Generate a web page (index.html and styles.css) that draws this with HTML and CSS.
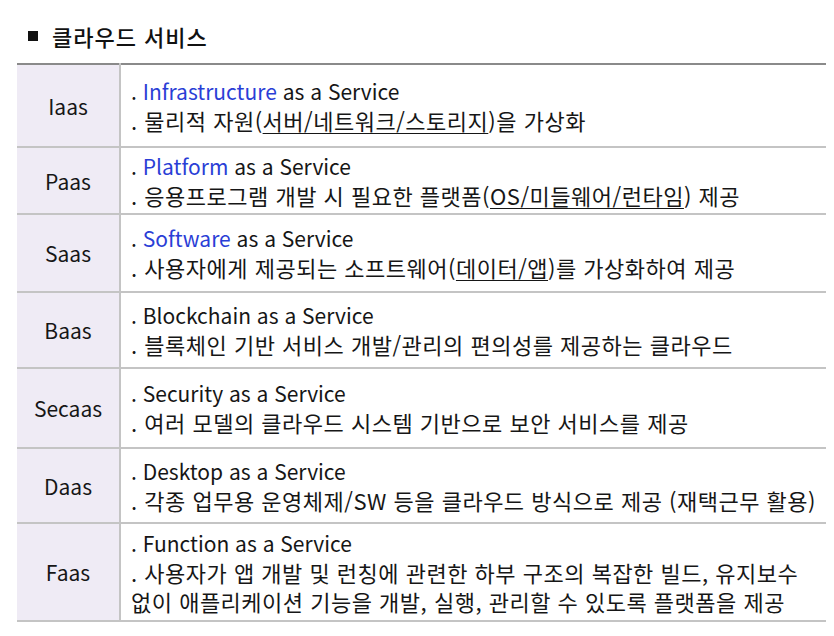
FILE: index.html
```html
<!DOCTYPE html>
<html lang="ko">
<head>
<meta charset="utf-8">
<title>클라우드 서비스</title>
<link rel="stylesheet" href="styles.css">
</head>
<body>
<div class="page">
  <h2 class="title"><span class="bullet"></span>클라우드 서비스</h2>
  <table class="svc">
    <tr class="r1">
      <th>Iaas</th>
      <td><div>. <span class="blue">Infrastructure</span> as a Service</div><div class="ko">. 물리적 자원(<u>서버/네트워크/스토리지</u>)을 가상화</div></td>
    </tr>
    <tr class="r2">
      <th>Paas</th>
      <td><div>. <span class="blue">Platform</span> as a Service</div><div class="ko">. 응용프로그램 개발 시 필요한 플랫폼(<u>OS/미들웨어/런타임</u>) 제공</div></td>
    </tr>
    <tr class="r3">
      <th>Saas</th>
      <td><div>. <span class="blue">Software</span> as a Service</div><div class="ko">. 사용자에게 제공되는 소프트웨어(<u>데이터/앱</u>)를 가상화하여 제공</div></td>
    </tr>
    <tr class="r4">
      <th>Baas</th>
      <td><div>. Blockchain as a Service</div><div class="ko">. 블록체인 기반 서비스 개발/관리의 편의성를 제공하는 클라우드</div></td>
    </tr>
    <tr class="r5">
      <th>Secaas</th>
      <td><div>. Security as a Service</div><div class="ko">. 여러 모델의 클라우드 시스템 기반으로 보안 서비스를 제공</div></td>
    </tr>
    <tr class="r6">
      <th>Daas</th>
      <td><div>. Desktop as a Service</div><div class="ko">. 각종 업무용 운영체제/SW 등을 클라우드 방식으로 제공 (재택근무 활용)</div></td>
    </tr>
    <tr class="r7">
      <th>Faas</th>
      <td><div>. Function as a Service</div><div class="ko">. 사용자가 앱 개발 및 런칭에 관련한 하부 구조의 복잡한 빌드, 유지보수</div><div class="ko">없이 애플리케이션 기능을 개발, 실행, 관리할 수 있도록 플랫폼을 제공</div></td>
    </tr>
  </table>
</div>
</body>
</html>
```
FILE: styles.css
```css
html, body {
  margin: 0;
  padding: 0;
  background: #ffffff;
}
body {
  font-family: "Noto Sans CJK KR", "Noto Sans", sans-serif;
  color: #161616;
}
.page {
  padding: 22px 8px 0 17px;
}
.title {
  display: flex;
  align-items: center;
  gap: 14px;
  margin: 0 0 13px 11px;
  font-size: 22px;
  letter-spacing: 1px;
  font-weight: 500;
  line-height: 28px;
  color: #111;
}
.bullet {
  width: 10px;
  height: 10px;
  background: #111;
}
.svc {
  width: 809px;
  border-collapse: collapse;
  border-top: 2px solid #8a8a8a;
}
.svc tr {
  border-bottom: 2px solid #c4c4c4;
}
.svc th {
  width: 102px;
  background: #efebf5;
  border-right: 2px solid #c4c4c4;
  font-weight: 400;
  font-size: 21px;
  text-align: center;
  vertical-align: middle;
  padding: 0;
  color: #161616;
}
.svc td {
  padding: 0 0 0 10px;
  vertical-align: middle;
  font-size: 21px;
  line-height: 29px;
}
.ko {
  font-size: 22px;
  letter-spacing: 0.5px;
  white-space: nowrap;
}
.blue {
  color: #2a3ed6;
}
u {
  text-decoration-thickness: 1px;
  text-underline-offset: 3px;
}
.r1 { height: 83px; }
.r2 { height: 67px; }
.r3 { height: 78px; }
.r4 { height: 76px; }
.r5 { height: 80px; }
.r6 { height: 75px; }
.r7 { height: 98px; }
```
